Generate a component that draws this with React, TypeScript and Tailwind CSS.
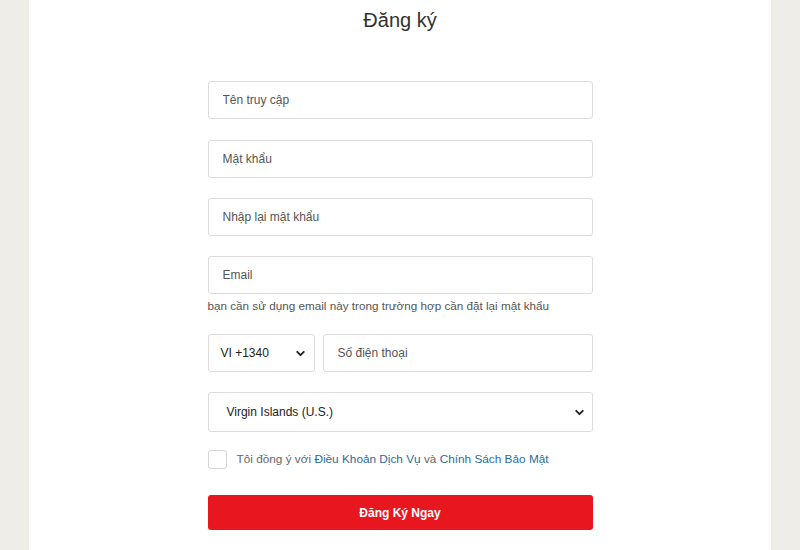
import { ChevronDown } from "lucide-react";

const font = "font-['Liberation_Sans','Arial',sans-serif]";

function Field({ placeholder, className = "" }: { placeholder: string; className?: string }) {
  return (
    <input
      placeholder={placeholder}
      className={`h-[38px] border border-[#dcdcdc] rounded-[3px] px-[14px] text-[12px] text-[#333] placeholder:text-[#555] outline-none bg-white ${className}`}
    />
  );
}

export default function App() {
  return (
    <div className={`min-h-[550px] bg-[#eeede8] ${font}`}>
      <div className="mx-[29px] min-h-[550px] bg-white flex flex-col items-center">
        <h1 className="mt-[8px] h-[24px] leading-[24px] text-[20px] text-[#333]">Đăng ký</h1>

        <form className="w-[385px] mt-[49px] flex flex-col">
          <Field placeholder="Tên truy cập" />
          <Field placeholder="Mật khẩu" className="mt-[21px]" />
          <Field placeholder="Nhập lại mật khẩu" className="mt-[20px]" />
          <Field placeholder="Email" className="mt-[20px]" />
          <p className="mt-[5px] text-[11.7px] leading-[14px] text-[#555]">
            bạn cần sử dụng email này trong trường hợp cần đặt lại mật khẩu
          </p>

          {/* phone */}
          <div className="mt-[21px] flex gap-[8px]">
            <div className="w-[107px] h-[38px] border border-[#dcdcdc] rounded-[3px] flex items-center justify-between pl-[12px] pr-[7px] text-[12px] text-[#222]">
              <span>VI +1340</span>
              <ChevronDown size={13} strokeWidth={3.5} className="text-[#222]" />
            </div>
            <Field placeholder="Số điện thoại" className="flex-1 min-w-0" />
          </div>

          {/* country */}
          <div className="mt-[20px] h-[40px] border border-[#dcdcdc] rounded-[3px] flex items-center justify-between pl-[18px] pr-[6px] text-[12px] text-[#222]">
            <span>Virgin Islands (U.S.)</span>
            <ChevronDown size={13} strokeWidth={3.5} className="text-[#222]" />
          </div>

          {/* terms */}
          <label className="mt-[18px] flex items-center gap-[10px] text-[11.8px] text-[#666]">
            <span className="w-[19px] h-[19px] border border-[#d4d4d4] rounded-[3px] bg-white shrink-0" />
            <span>
              Tôi đồng ý với <a className="text-[#2d6a9a]">Điều Khoản Dịch Vụ</a> và{" "}
              <a className="text-[#2d6a9a]">Chính Sách Bảo Mật</a>
            </span>
          </label>

          <button
            type="button"
            className="mt-[26px] h-[35px] rounded-[3px] bg-[#e8161f] text-white text-[12px] font-bold"
          >
            Đăng Ký Ngay
          </button>
        </form>
      </div>
    </div>
  );
}
